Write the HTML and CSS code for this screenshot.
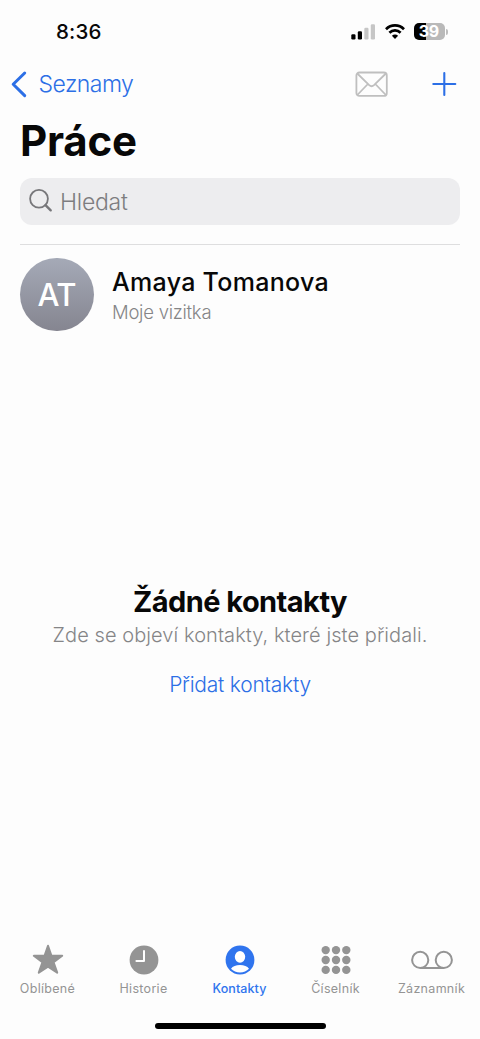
FILE: index.html
```html
<!DOCTYPE html>
<html lang="cs">
<head>
<meta charset="utf-8">
<title>Práce</title>
<link rel="stylesheet" href="styles.css">
</head>
<body>
<div class="screen">
  <div class="status">
    <span class="time">8:36</span>
    <div class="indicators">
      <svg class="signal" width="25" height="16" viewBox="0 0 25 16"><g fill="#000"><rect x="0.3" y="10.2" width="4.2" height="5.3" rx="1.2"/><rect x="6.8" y="7.3" width="4.2" height="8.2" rx="1.2"/></g><g fill="#c6c6c6"><rect x="13.3" y="3.8" width="4.2" height="11.7" rx="1.2"/><rect x="19.8" y="0.2" width="4.2" height="15.3" rx="1.2"/></g></svg>
      <svg class="wifi" width="20" height="15" viewBox="0 0 20 15" fill="none" stroke="#000" stroke-width="2.7"><path d="M1 5.2C6 .2 14 .2 19 5.2"/><path d="M4.4 8.8C7.6 5.6 12.4 5.6 15.6 8.8"/><path d="M10 14.9 6.9 11.7C8.6 10 11.4 10 13.1 11.7Z" fill="#000" stroke="none"/></svg>
      <div class="battery"><span class="battery-body">39</span><span class="battery-cap"></span></div>
    </div>
  </div>
  <div class="nav">
    <svg class="chevron" width="18" height="28" viewBox="0 0 18 28" fill="none" stroke="#2c6fe6" stroke-width="3" stroke-linecap="round" stroke-linejoin="round"><path d="M14.7 3 3.2 14.3 14.7 25.6"/></svg>
    <span class="back">Seznamy</span>
    <svg class="mail" width="33" height="26" viewBox="0 0 33 26" fill="none" stroke="#bfbfbf" stroke-width="1.8" stroke-linejoin="round"><rect x="1.4" y="1.5" width="30.4" height="23.4" rx="3"/><path d="M2.3 2.5 14.2 14.2Q16.6 16.4 19 14.2L30.9 2.5M2.3 24 12.9 13M30.9 24 20.3 13"/></svg>
    <svg class="plus" width="26" height="26" viewBox="0 0 26 26" stroke="#2c6fe6" stroke-width="2.1" stroke-linecap="round"><path d="M13.3 2V24M2.3 13H24.3"/></svg>
  </div>
  <h1 class="title">Práce</h1>
  <div class="search">
    <svg width="24" height="24" viewBox="0 0 24 24" fill="none" stroke="#77777a" stroke-linecap="round"><circle cx="10" cy="9.8" r="8.9" stroke-width="1.8"/><path d="M16.5 16.1 21.7 21.3" stroke-width="2.4"/></svg>
    <span class="placeholder">Hledat</span>
  </div>
  <div class="card">
    <div class="avatar"><span class="initials">AT</span></div>
    <div class="card-text">
      <span class="name">Amaya Tomanova</span>
      <span class="subtitle">Moje vizitka</span>
    </div>
  </div>
  <div class="empty">
    <span class="empty-title">Žádné kontakty</span>
    <span class="empty-text">Zde se objeví kontakty, které jste přidali.</span>
    <span class="empty-link">Přidat kontakty</span>
  </div>
  <div class="tabs">
    <div class="tab">
      <svg width="32" height="32" viewBox="0 0 32 32"><path fill="#949494" stroke="#949494" stroke-width="2" stroke-linejoin="round" d="M16 1.8 19.4 11.6 30.2 11.8 21.6 18.3 25.2 28.7 16 22.6 6.8 28.7 10.4 18.3 1.8 11.8 12.6 11.6Z"/></svg>
      <span class="label">Oblíbené</span>
    </div>
    <div class="tab">
      <svg width="32" height="32" viewBox="0 0 32 32"><circle cx="16" cy="16" r="14.4" fill="#949494"/><path d="M16 7V17H8.4" fill="none" stroke="#fff" stroke-width="2" stroke-linecap="round" stroke-linejoin="round"/></svg>
      <span class="label">Historie</span>
    </div>
    <div class="tab active">
      <svg width="32" height="32" viewBox="0 0 32 32"><circle cx="16" cy="16" r="14.4" fill="#2f74ee"/><ellipse cx="16" cy="12.8" rx="5.2" ry="5.9" fill="#fff"/><path d="M7 24.7C8.8 22 11.9 20.9 16 20.9S23.2 22 25 24.7C22.7 27.1 19.6 28.4 16 28.4S9.3 27.1 7 24.7Z" fill="#fff"/></svg>
      <span class="label">Kontakty</span>
    </div>
    <div class="tab">
      <svg width="32" height="32" viewBox="0 0 32 32" fill="#949494"><circle cx="5.7" cy="6.1" r="4.2"/><circle cx="16" cy="6.1" r="4.2"/><circle cx="26.3" cy="6.1" r="4.2"/><circle cx="5.7" cy="16" r="4.2"/><circle cx="16" cy="16" r="4.2"/><circle cx="26.3" cy="16" r="4.2"/><circle cx="5.7" cy="25.9" r="4.2"/><circle cx="16" cy="25.9" r="4.2"/><circle cx="26.3" cy="25.9" r="4.2"/></svg>
      <span class="label">Číselník</span>
    </div>
    <div class="tab">
      <svg width="44" height="32" viewBox="0 0 44 32" fill="none" stroke="#949494" stroke-width="2"><circle cx="10.2" cy="15.9" r="8.1"/><circle cx="33.8" cy="15.9" r="8.1"/><path d="M10.2 24H33.8"/></svg>
      <span class="label">Záznamník</span>
    </div>
  </div>
  <div class="home"></div>
</div>
</body>
</html>
```
FILE: styles.css
```css
* { box-sizing: border-box; }
body { margin: 0; background: #fdfdfd; font-family: Inter, "Liberation Sans", sans-serif; color: #080808; }
svg { display: block; flex: none; }
span { white-space: nowrap; }
.screen { width: 480px; height: 1039px; display: flex; flex-direction: column; background: #fdfdfd; overflow: hidden; }

.status { height: 60px; flex: none; display: flex; justify-content: space-between; padding: 0 32px 0 56px; }
.time { font-size: 20.5px; line-height: 24px; font-weight: 500; margin-top: 20px; letter-spacing: 0.2px; }
.indicators { display: flex; align-items: flex-start; padding-top: 23px; }
.signal { margin-top: 1px; }
.wifi { margin-left: 9px; margin-top: 1px; }
.battery { display: flex; align-items: center; margin-left: 9px; }
.battery-body { width: 31px; height: 17px; border-radius: 5px; background: linear-gradient(90deg, #000 39%, #b9b9b9 39%); color: #fff; font-size: 16px; line-height: 17px; font-weight: 700; text-align: center; letter-spacing: -0.4px; padding-right: 1.5px; }
.battery-cap { width: 2px; height: 6px; margin-left: 1px; border-radius: 0 2px 2px 0; background: #bdbdbd; }

.nav { height: 48px; flex: none; display: flex; align-items: center; padding: 0 23px 0 10px; }
.chevron { margin-right: 10.5px; }
.back { font-size: 23px; line-height: 28px; color: #2c6fe6; letter-spacing: -0.55px; font-weight: 350; }
.mail { margin-left: auto; }
.plus { margin-left: 43px; }

.title { margin: 7px 0 0 20px; height: 52px; line-height: 52px; font-size: 42px; font-weight: 700; letter-spacing: -0.2px; }
.search { height: 47.5px; flex: none; margin: 10.5px 20px 0; padding: 0 9px; display: flex; align-items: center; gap: 7px; border-radius: 12px; background: #ededef; color: #7d7d80; }
.placeholder { font-size: 23px; line-height: 28px; letter-spacing: -0.25px; padding-top: 1px; font-weight: 350; }

.card { flex: none; margin: 19px 20px 0; padding-top: 12.5px; border-top: 1px solid #dededf; display: flex; gap: 18.5px; height: 101px; }
.avatar { width: 73.5px; height: 73.5px; flex: none; border-radius: 50%; background: linear-gradient(#a5aab7, #858590); display: flex; align-items: center; justify-content: center; }
.initials { color: #fff; font-size: 31px; line-height: 38px; font-weight: 550; padding-top: 2px; letter-spacing: -0.5px; }
.card-text { display: flex; flex-direction: column; padding-top: 8px; }
.name { font-size: 25px; line-height: 32px; font-weight: 500; letter-spacing: 0.3px; }
.subtitle { font-size: 18.5px; line-height: 28px; color: #858587; letter-spacing: -0.25px; font-weight: 350; }

.empty { flex: 1; display: flex; flex-direction: column; align-items: center; padding-top: 239px; }
.empty-title { font-size: 29px; line-height: 36px; font-weight: 700; letter-spacing: -0.55px; }
.empty-text { font-size: 20px; line-height: 28px; margin-top: 1px; color: #858587; letter-spacing: 0.07px; font-weight: 350; }
.empty-link { font-size: 21px; line-height: 28px; margin-top: 22px; color: #2c6fe6; letter-spacing: -0.22px; font-weight: 350; }

.tabs { height: 79px; flex: none; display: grid; grid-template-columns: repeat(5, 96px); margin-left: -0.5px; }
.tab { display: flex; flex-direction: column; align-items: center; color: #949494; }
.tab.active { color: #2f74ee; }
.label { font-size: 12.5px; line-height: 16px; margin-top: 4px; letter-spacing: 0.3px; font-weight: 400; padding-top: 0.5px; }
.active .label { font-weight: 500; letter-spacing: 0.1px; }
.home { width: 171px; height: 6px; flex: none; margin: 0 auto 10px; border-radius: 3px; background: #000; }
```
